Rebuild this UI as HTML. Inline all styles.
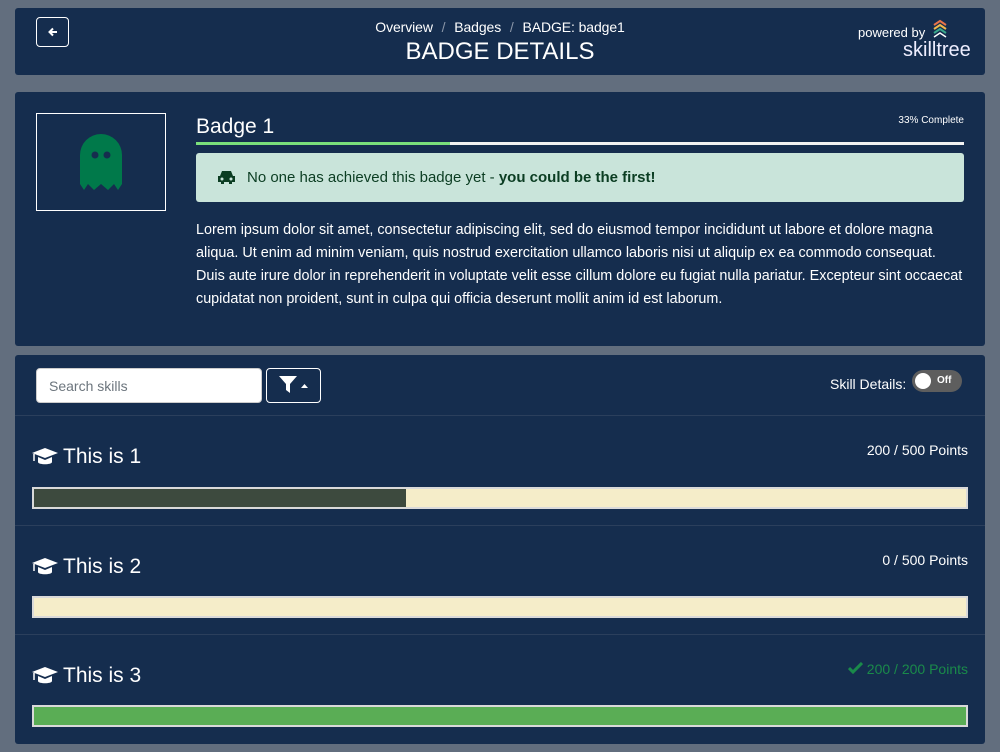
<!DOCTYPE html><html><head><style>
body{margin:0;background:#626e7e;font-family:"Liberation Sans",sans-serif;color:#fff;width:1000px;height:752px;overflow:hidden;position:relative}
.p{position:absolute;left:15px;width:970px;background:#152d4e;border-radius:3px}
.abs{position:absolute}
.bar{position:absolute;left:32px;width:932px;height:18px;border:2px solid #d9d9d9;background:#f5edc9}
.sep{position:absolute;left:15px;width:970px;height:1px;background:#2b3f5c}
.title{position:absolute;left:32px;font-size:21px;display:flex;align-items:center;gap:5px}
.pts{position:absolute;right:32px;font-size:14px}
</style></head><body>
<div class="p" style="top:8px;height:67px"></div>
<div class="abs" style="left:36px;top:17px;width:31px;height:28px;border:1px solid #fff;border-radius:4px;text-align:center;line-height:28px;font-size:14px">
<svg width="12" height="12" viewBox="0 0 12 12" style="vertical-align:-1px"><path d="M10 6H3M6 2.5L2.5 6 6 9.5" stroke="#fff" stroke-width="2" fill="none"/></svg></div>
<div class="abs" style="left:0;width:1000px;top:19px;text-align:center;font-size:14px;letter-spacing:-0.1px">Overview <span style="color:#8a96a8;margin:0 5px">/</span> Badges <span style="color:#8a96a8;margin:0 5px">/</span> BADGE: badge1</div>
<div class="abs" style="left:0;width:1000px;top:38px;text-align:center;font-size:24px">BADGE DETAILS</div>
<div class="abs" style="left:858px;top:25px;font-size:13px">powered by</div>
<svg class="abs" style="left:931px;top:19px" width="18" height="24" viewBox="0 0 18 24"><path d="M3 6l6-4 6 4" stroke="#e8734a" stroke-width="2" fill="none"/><path d="M3 10l6-4 6 4" stroke="#f0b84a" stroke-width="2" fill="none"/><path d="M3 14l6-4 6 4" stroke="#3aa88c" stroke-width="2" fill="none"/><path d="M3 18l6-4 6 4" stroke="#fff" stroke-width="1.5" fill="none"/></svg>
<div class="abs" style="left:903px;top:39px;font-size:20px;letter-spacing:0;color:#eef">skilltree</div>

<div class="p" style="top:92px;height:254px"></div>
<div class="abs" style="left:36px;top:113px;width:128px;height:96px;border:1px solid #fff"></div>
<svg class="abs" style="left:80px;top:134px" width="42" height="56" viewBox="0 0 42 56"><path d="M0 21A21 21 0 0 1 42 21V50L38 56 34 50 28 56 21 50 14 56 8 50 4 56 0 50Z" fill="#00794a"/><circle cx="15" cy="21" r="3.5" fill="#152d4e"/><circle cx="27" cy="21" r="3.5" fill="#152d4e"/></svg>
<div class="abs" style="left:196px;top:115px;font-size:21px">Badge 1</div>
<div class="abs" style="right:36px;top:115px;font-size:10px">33% Complete</div>
<div class="abs" style="left:196px;top:142px;width:768px;height:3px;background:#f2f2f2"><div style="width:254px;height:3px;background:#7be07b"></div></div>
<div class="abs" style="left:196px;top:153px;width:768px;height:49px;background:#c9e4da;border-radius:3px;color:#0b3d22;font-size:15px;line-height:50px">
<svg style="position:absolute;left:21px;top:17px" width="19" height="15" viewBox="0 0 19 15"><path d="M3 6L5 1H14L16 6H18V12H15V14H12V12H7V14H4V12H1V6Z" fill="#0b3d22"/><circle cx="5" cy="9" r="1.5" fill="#c9e4da"/><circle cx="14" cy="9" r="1.5" fill="#c9e4da"/></svg>
<span style="margin-left:51px">No one has achieved this badge yet - <b>you could be the first!</b></span></div>
<div class="abs" style="left:196px;top:219px;white-space:nowrap;font-size:14.38px;line-height:23px">Lorem ipsum dolor sit amet, consectetur adipiscing elit, sed do eiusmod tempor incididunt ut labore et dolore magna<br>aliqua. Ut enim ad minim veniam, quis nostrud exercitation ullamco laboris nisi ut aliquip ex ea commodo consequat.<br>Duis aute irure dolor in reprehenderit in voluptate velit esse cillum dolore eu fugiat nulla pariatur. Excepteur sint occaecat<br>cupidatat non proident, sunt in culpa qui officia deserunt mollit anim id est laborum.</div>

<div class="p" style="top:355px;height:389px"></div>
<div class="abs" style="left:36px;top:368px;width:224px;height:33px;background:#fff;border:1px solid #ccc;border-radius:4px;color:#6c757d;font-size:14px;line-height:35px;text-indent:12px">Search skills</div>
<div class="abs" style="left:266px;top:368px;width:53px;height:33px;border:1px solid #fff;border-radius:4px">
<svg style="position:absolute;left:12px;top:7px" width="30" height="18" viewBox="0 0 30 18"><path d="M0 0H18L11 8V17L7 14V8Z" fill="#fff"/><path d="M22 12L25.5 8 29 12Z" fill="#fff"/></svg></div>
<div class="abs" style="left:830px;top:376px;font-size:14px">Skill Details:</div>
<div class="abs" style="left:912px;top:370px;width:50px;height:22px;background:#5e5e5e;border-radius:11px"><div style="position:absolute;left:3px;top:3px;width:16px;height:16px;border-radius:50%;background:#fff"></div><div style="position:absolute;left:25px;top:5px;font-size:10px;font-weight:bold">Off</div></div>
<div class="sep" style="top:415px"></div>

<div class="title" style="top:445px"><svg width="26" height="20" viewBox="0 0 26 20"><path d="M13 1L26 6 13 11 0 6Z" fill="#fff"/><path d="M6 10V15C6 18 20 18 20 15V10L13 13Z" fill="#fff"/><path d="M2 7V14" stroke="#fff" stroke-width="1.5"/></svg>This is 1</div>
<div class="pts" style="top:442px">200 / 500 Points</div>
<div class="bar" style="top:487px"><div style="width:372px;height:18px;background:#3d4a3e"></div></div>
<div class="sep" style="top:525px"></div>

<div class="title" style="top:555px"><svg width="26" height="20" viewBox="0 0 26 20"><path d="M13 1L26 6 13 11 0 6Z" fill="#fff"/><path d="M6 10V15C6 18 20 18 20 15V10L13 13Z" fill="#fff"/><path d="M2 7V14" stroke="#fff" stroke-width="1.5"/></svg>This is 2</div>
<div class="pts" style="top:552px">0 / 500 Points</div>
<div class="bar" style="top:596px"></div>
<div class="sep" style="top:634px"></div>

<div class="title" style="top:664px"><svg width="26" height="20" viewBox="0 0 26 20"><path d="M13 1L26 6 13 11 0 6Z" fill="#fff"/><path d="M6 10V15C6 18 20 18 20 15V10L13 13Z" fill="#fff"/><path d="M2 7V14" stroke="#fff" stroke-width="1.5"/></svg>This is 3</div>
<div class="pts" style="top:661px;color:#1a8a4a"><svg width="15" height="12" viewBox="0 0 15 12"><path d="M1 6L5 10 14 1" stroke="#1a8a4a" stroke-width="3" fill="none"/></svg> 200 / 200 Points</div>
<div class="bar" style="top:705px;background:#5aad55"></div>
</body></html>
